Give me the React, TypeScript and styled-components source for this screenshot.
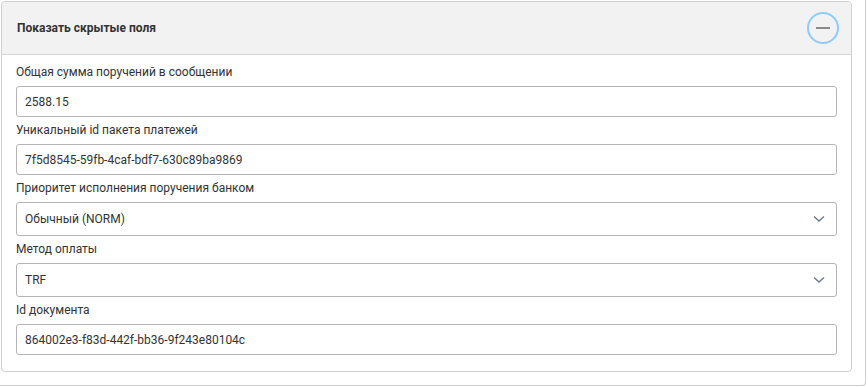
import React from 'react';
import styled, { createGlobalStyle } from 'styled-components';

const GlobalStyle = createGlobalStyle`
  html, body {
    margin: 0;
    padding: 0;
    background: #fff;
  }
  body {
    font-family: Roboto, "Noto Sans", sans-serif;
    color: #333;
  }
`;

const Frame = styled.div`
  width: 866px;
  height: 386px;
  box-sizing: border-box;
  padding: 1px 0 0 1px;
  border-right: 1px solid #cfcfcf;
  border-bottom: 1px solid #cfcfcf;
  border-bottom-right-radius: 4px;
`;

const Panel = styled.section`
  width: 851px;
  height: 371px;
  box-sizing: border-box;
  border: 1px solid #cfcfcf;
  border-radius: 4px;
  overflow: hidden;
`;

const Header = styled.div`
  display: flex;
  align-items: center;
  justify-content: space-between;
  height: 53px;
  box-sizing: border-box;
  padding: 0 12px 0 15px;
  background: #f2f2f2;
  border-bottom: 1px solid #d6d6d6;
`;

const Title = styled.h3`
  margin: 0;
  font-size: 12px;
  font-weight: 700;
  color: #333;
`;

const ToggleButton = styled.button`
  display: flex;
  align-items: center;
  justify-content: center;
  width: 32px;
  height: 32px;
  padding: 0;
  border: 2px solid #8ccaff;
  border-radius: 50%;
  background: transparent;
  cursor: pointer;

  &::before {
    content: '';
    width: 14px;
    height: 2px;
    background: #8a8a8a;
  }
`;

const Body = styled.div`
  padding: 4px 14px 13px 14px;
`;

const Label = styled.label`
  display: block;
  padding: 4px 0 5px;
  font-size: 12px;
  line-height: 18px;
  color: #333;
`;

const Field = styled.div<{ $tall?: boolean }>`
  position: relative;
  display: flex;
  align-items: center;
  height: ${(p) => (p.$tall ? '34px' : '31px')};
  box-sizing: border-box;
  padding: 0 8px;
  border: 1px solid #b5b5b5;
  border-radius: 3px;
  font-size: 12px;
  color: #333;
`;

const Chevron = styled.svg`
  position: absolute;
  right: 11px;
  top: 50%;
  margin-top: -4px;
`;

type Item = { label: string; value: string; select?: boolean };

const items: Item[] = [
  { label: 'Общая сумма поручений в сообщении', value: '2588.15' },
  { label: 'Уникальный id пакета платежей', value: '7f5d8545-59fb-4caf-bdf7-630c89ba9869' },
  { label: 'Приоритет исполнения поручения банком', value: 'Обычный (NORM)', select: true },
  { label: 'Метод оплаты', value: 'TRF', select: true },
  { label: 'Id документа', value: '864002e3-f83d-442f-bb36-9f243e80104c' },
];

export default function App() {
  return (
    <>
      <GlobalStyle />
      <Frame>
        <Panel>
          <Header>
            <Title>Показать скрытые поля</Title>
            <ToggleButton aria-label="Свернуть" />
          </Header>
          <Body>
            {items.map((it) => (
              <div key={it.label}>
                <Label>{it.label}</Label>
                <Field $tall={it.select}>
                  {it.value}
                  {it.select && (
                    <Chevron width="12" height="8" viewBox="0 0 12 8">
                      <path d="M1 1.5 L6 6 L11 1.5" fill="none" stroke="#6b7a8a" strokeWidth="1.4" />
                    </Chevron>
                  )}
                </Field>
              </div>
            ))}
          </Body>
        </Panel>
      </Frame>
    </>
  );
}
